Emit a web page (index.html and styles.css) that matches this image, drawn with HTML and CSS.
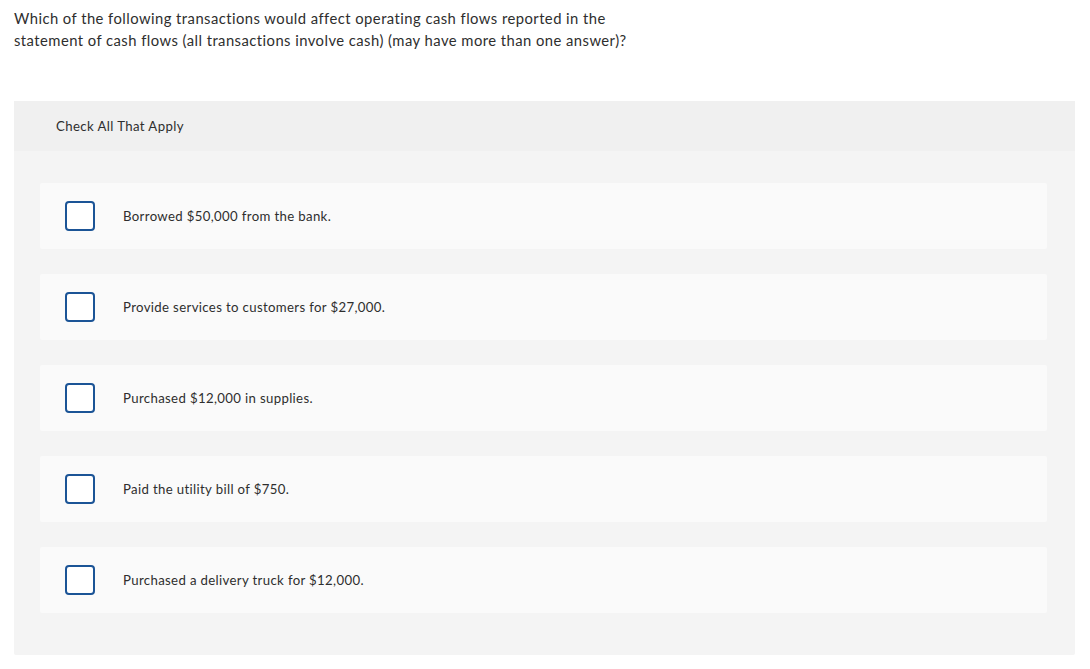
FILE: index.html
```html
<!DOCTYPE html>
<html>
<head>
<meta charset="utf-8">
<link rel="stylesheet" href="styles.css">
</head>
<body>
<div class="page">
  <p class="question">Which of the following transactions would affect operating cash flows reported in the<br>statement of cash flows (all transactions involve cash) (may have more than one answer)?</p>
  <div class="panel">
    <div class="panel-head">Check All That Apply</div>
    <div class="panel-body">
      <div class="option"><span class="box"></span><span class="label">Borrowed $50,000 from the bank.</span></div>
      <div class="option"><span class="box"></span><span class="label">Provide services to customers for $27,000.</span></div>
      <div class="option"><span class="box"></span><span class="label">Purchased $12,000 in supplies.</span></div>
      <div class="option"><span class="box"></span><span class="label">Paid the utility bill of $750.</span></div>
      <div class="option"><span class="box"></span><span class="label">Purchased a delivery truck for $12,000.</span></div>
    </div>
  </div>
</div>
</body>
</html>
```
FILE: styles.css
```css
html, body {
  margin: 0;
  padding: 0;
  background: #ffffff;
}
.page {
  padding: 7px 15px 0 14px;
  font-family: "Lato", "Open Sans", "Liberation Sans", sans-serif;
  color: #2e2e2e;
}
.question {
  margin: 0;
  font-size: 14.8px;
  line-height: 22px;
  letter-spacing: 0.45px;
}
.panel {
  margin-top: 50px;
  background: #f4f4f4;
  border-radius: 2px;
}
.panel-head {
  height: 50px;
  box-sizing: border-box;
  padding-left: 42px;
  display: flex;
  align-items: center;
  background: #f0f0f0;
  font-size: 13.2px;
  letter-spacing: 0.4px;
}
.panel-body {
  padding: 32px 28px 42px 26px;
  display: flex;
  flex-direction: column;
  gap: 25px;
}
.option {
  height: 66px;
  background: #fafafa;
  border-radius: 2px;
  display: flex;
  align-items: center;
  padding-left: 25px;
}
.box {
  width: 30px;
  height: 30px;
  box-sizing: border-box;
  border: 2px solid #1b5496;
  border-radius: 4px;
  background: #ffffff;
  flex: none;
}
.label {
  margin-left: 28px;
  font-size: 13.2px;
  letter-spacing: 0.35px;
}
```
